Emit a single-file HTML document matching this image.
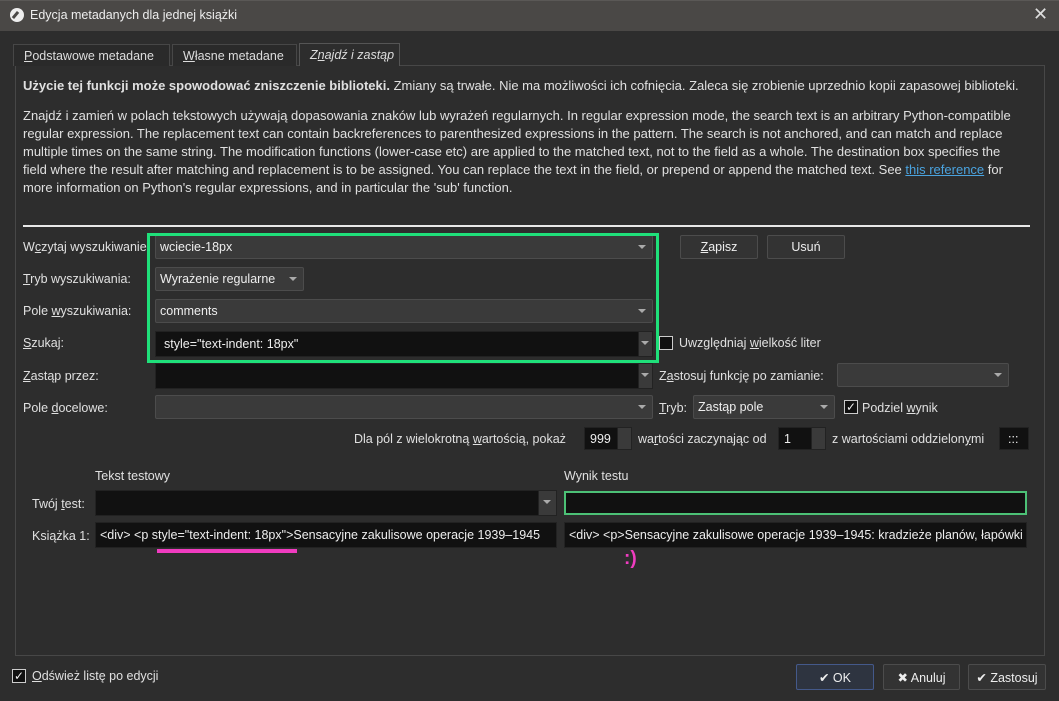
<!DOCTYPE html>
<html><head><meta charset="utf-8"><style>
*{box-sizing:border-box;margin:0;padding:0}
body{width:1059px;height:701px;background:#2d2d2d;font-family:"Liberation Sans",sans-serif;font-size:12.5px;color:#e0e0e0;position:relative;overflow:hidden}
.a{position:absolute;white-space:nowrap}
.title{left:0;top:0;width:1059px;height:31px;background:#4a4846;border-top:1px solid #5a5856}
.panel{left:15px;top:65px;width:1030px;height:591px;border:1px solid #474747;background:#2d2d2d}
.tab{top:44px;height:22px;border:1px solid #474747;border-bottom:none;background:#2a2a2a;padding:4px 10px 0;color:#ddd}
.cb{background:#3a3a3a;border:1px solid #4c4c4c;border-radius:2px;height:24px;padding:4px 4px;color:#eee}
.dk{background:#111;border:1px solid #222;height:26px;color:#eee;padding:5px 8px}
.arr{position:absolute;right:6px;top:9px;width:0;height:0;border-left:4px solid transparent;border-right:4px solid transparent;border-top:4px solid #aaa}
.btn{background:#333;border:1px solid #4c4c4c;border-radius:2px;height:24px;text-align:center;padding-top:4px;color:#eee}
.sp{position:absolute;right:0;top:0;width:14px;height:100%;background:#3a3a3a;border-left:1px solid #222}
.chk{width:14px;height:14px;border:1px solid #ccc;background:#111;font-size:12px;line-height:12px;text-align:center;color:#eee}
u{text-decoration:underline}
.para{font-size:13px;line-height:18px}
</style></head><body>
<div class="a title"></div>
<div class="a" style="left:10px;top:8px;width:14px;height:14px;border-radius:50%;background:#eee"></div>
<div class="a" style="left:14px;top:11px;width:3px;height:8px;background:#4a4846;transform:rotate(40deg)"></div>
<div class="a" style="left:30px;top:8px;color:#eee">Edycja metadanych dla jednej książki</div>
<div class="a" style="left:1033px;top:4px;font-size:18px;color:#ddd">✕</div>

<div class="a panel"></div>
<div class="a tab" style="left:13px;width:157px"><u>P</u>odstawowe metadane</div>
<div class="a tab" style="left:172px;width:125px"><u>W</u>łasne metadane</div>
<div class="a tab" style="left:299px;top:43px;height:23px;width:101px;background:#2d2d2d;font-style:italic;border-color:#555">Z<u>n</u>ajdź i zastąp</div>

<div class="a para" style="left:23px;top:77px"><b>Użycie tej funkcji może spowodować zniszczenie biblioteki.</b> Zmiany są trwałe. Nie ma możliwości ich cofnięcia. Zaleca się zrobienie uprzednio kopii zapasowej biblioteki.</div>
<div class="a para" style="left:23px;top:107px">Znajdź i zamień w polach tekstowych używają dopasowania znaków lub wyrażeń regularnych. In regular expression mode, the search text is an arbitrary Python-compatible<br>regular expression. The replacement text can contain backreferences to parenthesized expressions in the pattern. The search is not anchored, and can match and replace<br>multiple times on the same string. The modification functions (lower-case etc) are applied to the matched text, not to the field as a whole. The destination box specifies the<br>field where the result after matching and replacement is to be assigned. You can replace the text in the field, or prepend or append the matched text. See <u style="color:#4aa3df">this reference</u> for<br>more information on Python's regular expressions, and in particular the 'sub' function.</div>
<div class="a" style="left:23px;top:225px;width:1007px;height:2px;background:#e8e8e8"></div>

<div class="a" style="left:23px;top:240px">W<u>c</u>zytaj wyszukiwanie:</div>
<div class="a" style="left:23px;top:272px"><u>T</u>ryb wyszukiwania:</div>
<div class="a" style="left:23px;top:304px">Pole <u>w</u>yszukiwania:</div>
<div class="a" style="left:23px;top:336px"><u>S</u>zukaj:</div>
<div class="a" style="left:23px;top:369px"><u>Z</u>astąp przez:</div>
<div class="a" style="left:23px;top:401px">Pole <u>d</u>ocelowe:</div>

<div class="a cb" style="left:155px;top:235px;width:498px">wciecie-18px<span class="arr"></span></div>
<div class="a cb" style="left:155px;top:267px;width:149px">Wyrażenie regularne<span class="arr"></span></div>
<div class="a cb" style="left:155px;top:299px;width:498px">comments<span class="arr"></span></div>
<div class="a dk" style="left:155px;top:331px;width:498px">style="text-indent: 18px"<span class="sp" style="background:#3a3a3a"><span class="arr" style="right:3px"></span></span></div>
<div class="a dk" style="left:155px;top:363px;width:498px"><span class="sp"><span class="arr" style="right:3px"></span></span></div>
<div class="a cb" style="left:155px;top:395px;width:498px"><span class="arr"></span></div>
<div class="a" style="left:147px;top:233px;width:512px;height:130px;border:3px solid #1fe07a"></div>

<div class="a btn" style="left:680px;top:235px;width:78px"><u>Z</u>apisz</div>
<div class="a btn" style="left:767px;top:235px;width:78px">Usuń</div>
<div class="a chk" style="left:659px;top:336px"></div>
<div class="a" style="left:679px;top:336px">Uwzględniaj <u>w</u>ielkość liter</div>
<div class="a" style="left:659px;top:369px">Z<u>a</u>stosuj funkcję po zamianie:</div>
<div class="a cb" style="left:837px;top:363px;width:172px"><span class="arr"></span></div>
<div class="a" style="left:659px;top:401px"><u>T</u>ryb:</div>
<div class="a cb" style="left:693px;top:395px;width:142px">Zastąp pole<span class="arr"></span></div>
<div class="a chk" style="left:844px;top:400px">✓</div>
<div class="a" style="left:862px;top:401px">Podziel <u>w</u>ynik</div>

<div class="a" style="left:354px;top:432px">Dla pól z wielokrotną <u>w</u>artością, pokaż</div>
<div class="a dk" style="left:584px;top:427px;width:48px;height:23px;padding:4px 5px">999<span class="sp" style="background:#3a3a3a"></span></div>
<div class="a" style="left:638px;top:432px">wa<u>r</u>tości zaczynając od</div>
<div class="a dk" style="left:778px;top:427px;width:48px;height:23px;padding:4px 5px">1<span class="sp" style="background:#3a3a3a"></span></div>
<div class="a" style="left:832px;top:432px">z wartościami oddzielon<u>y</u>mi</div>
<div class="a dk" style="left:999px;top:427px;width:30px;height:23px;padding:4px 8px">:::</div>

<div class="a" style="left:95px;top:469px">Tekst testowy</div>
<div class="a" style="left:564px;top:469px">Wynik testu</div>
<div class="a" style="left:32px;top:497px">Twój <u>t</u>est:</div>
<div class="a dk" style="left:95px;top:490px;width:462px"><span class="sp" style="width:18px;background:#3a3a3a"><span class="arr" style="right:5px"></span></span></div>
<div class="a dk" style="left:564px;top:491px;width:463px;height:24px;border:2px solid #4cc176"></div>
<div class="a" style="left:32px;top:529px">Książka 1:</div>
<div class="a dk" style="left:95px;top:522px;width:462px;overflow:hidden;padding:5px 4px">&lt;div&gt; &lt;p style="text-indent: 18px"&gt;Sensacyjne zakulisowe operacje 1939–1945</div>
<div class="a dk" style="left:564px;top:522px;width:463px;overflow:hidden;padding:5px 4px">&lt;div&gt; &lt;p&gt;Sensacyjne zakulisowe operacje 1939–1945: kradzieże planów, łapówki</div>
<div class="a" style="left:157px;top:549px;width:140px;height:4px;background:#f03cc0"></div>
<div class="a" style="left:624px;top:548px;color:#f03cc0;font-weight:bold;font-size:19px">:)</div>

<div class="a chk" style="left:12px;top:669px">✓</div>
<div class="a" style="left:32px;top:669px"><u>O</u>dśwież listę po edycji</div>
<div class="a btn" style="left:796px;top:664px;width:78px;height:26px;background:#2e3440;border-color:#44598a;padding-top:5px">✔ OK</div>
<div class="a btn" style="left:883px;top:664px;width:77px;height:26px;padding-top:5px">✖ Anuluj</div>
<div class="a btn" style="left:968px;top:664px;width:78px;height:26px;padding-top:5px">✔ Zastosuj</div>
</body></html>
